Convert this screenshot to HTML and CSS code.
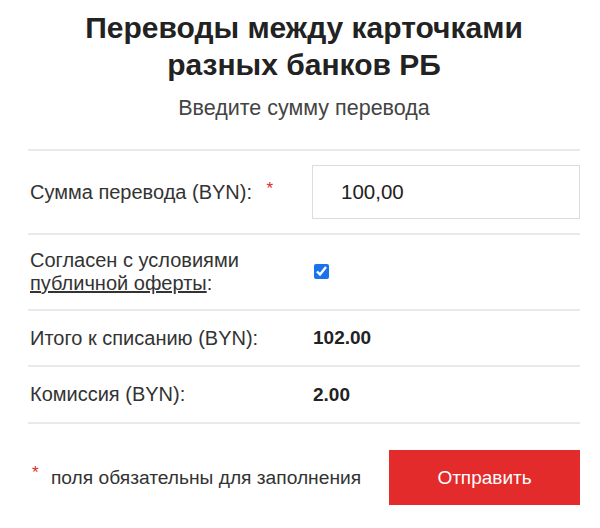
FILE: index.html
```html
<!DOCTYPE html>
<html lang="ru">
<head>
<meta charset="utf-8">
<link rel="stylesheet" href="styles.css">
</head>
<body>
<div class="page">
  <h1 class="title">Переводы между карточками<br>разных банков РБ</h1>
  <p class="subtitle">Введите сумму перевода</p>
  <div class="form">
    <div class="row row-input">
      <div class="label">Сумма перевода (BYN): <span class="req">*</span></div>
      <div class="value"><div class="input">100,00</div></div>
    </div>
    <div class="row row-check">
      <div class="label">Согласен с условиями<br><a class="link" href="#">публичной оферты</a>:</div>
      <div class="value"><input class="check" type="checkbox" checked></div>
    </div>
    <div class="row row-info">
      <div class="label">Итого к списанию (BYN):</div>
      <div class="value strong">102.00</div>
    </div>
    <div class="row row-info row-last">
      <div class="label">Комиссия (BYN):</div>
      <div class="value strong">2.00</div>
    </div>
  </div>
  <div class="footer">
    <div class="note"><span class="req">*</span> поля обязательны для заполнения</div>
    <button class="btn" type="button">Отправить</button>
  </div>
</div>
</body>
</html>
```
FILE: styles.css
```css
html, body {
  margin: 0;
  padding: 0;
  background: #ffffff;
}
body {
  font-family: "Liberation Sans", Arial, sans-serif;
  color: #333333;
}
.page {
  width: 552px;
  margin-left: 28px;
}
.title {
  margin: 0;
  padding-top: 9px;
  text-align: center;
  font-size: 30px;
  line-height: 37px;
  font-weight: bold;
  color: #222222;
}
.subtitle {
  margin: 0;
  padding-top: 13px;
  padding-bottom: 29px;
  text-align: center;
  font-size: 21.5px;
  line-height: 24px;
  color: #444444;
}
.form {
  border-top: 2px solid #e9e9e9;
}
.row {
  display: grid;
  grid-template-columns: 284px 1fr;
  align-items: center;
  border-bottom: 2px solid #e9e9e9;
  font-size: 20px;
}
.label {
  padding-left: 2px;
  line-height: 23px;
  color: #333333;
}
.req {
  color: #e0282b;
  font-size: 17px;
  vertical-align: top;
  position: relative;
  top: -4px;
  margin-left: 9px;
}
.row-input {
  padding: 14px 0;
}
.input {
  border: 1px solid #dcdcdc;
  box-sizing: border-box;
  height: 54px;
  padding-left: 28px;
  display: flex;
  align-items: center;
  font-size: 20.5px;
  color: #222222;
}
.row-check {
  padding: 14px 0;
}
.row-check .value {
  padding-left: 2px;
}
.check {
  margin: 0;
  width: 15px;
  height: 15px;
  accent-color: #1a73e8;
}
.link {
  color: #333333;
  text-decoration: underline;
}
.row-info {
  height: 54px;
}
.row-last {
  height: 55px;
}
.strong {
  font-weight: bold;
  font-size: 19px;
  color: #222222;
  padding-left: 1px;
}
.footer {
  display: flex;
  justify-content: space-between;
  align-items: center;
  padding-top: 26px;
}
.note {
  font-size: 19.2px;
  color: #333333;
  padding-left: 4px;
}
.note .req {
  margin-left: 0;
  margin-right: 7px;
}
.btn {
  width: 191px;
  height: 55px;
  border: none;
  background: #e32b2b;
  color: #ffffff;
  font-family: "Liberation Sans", Arial, sans-serif;
  font-size: 19px;
  padding: 0;
}
```
